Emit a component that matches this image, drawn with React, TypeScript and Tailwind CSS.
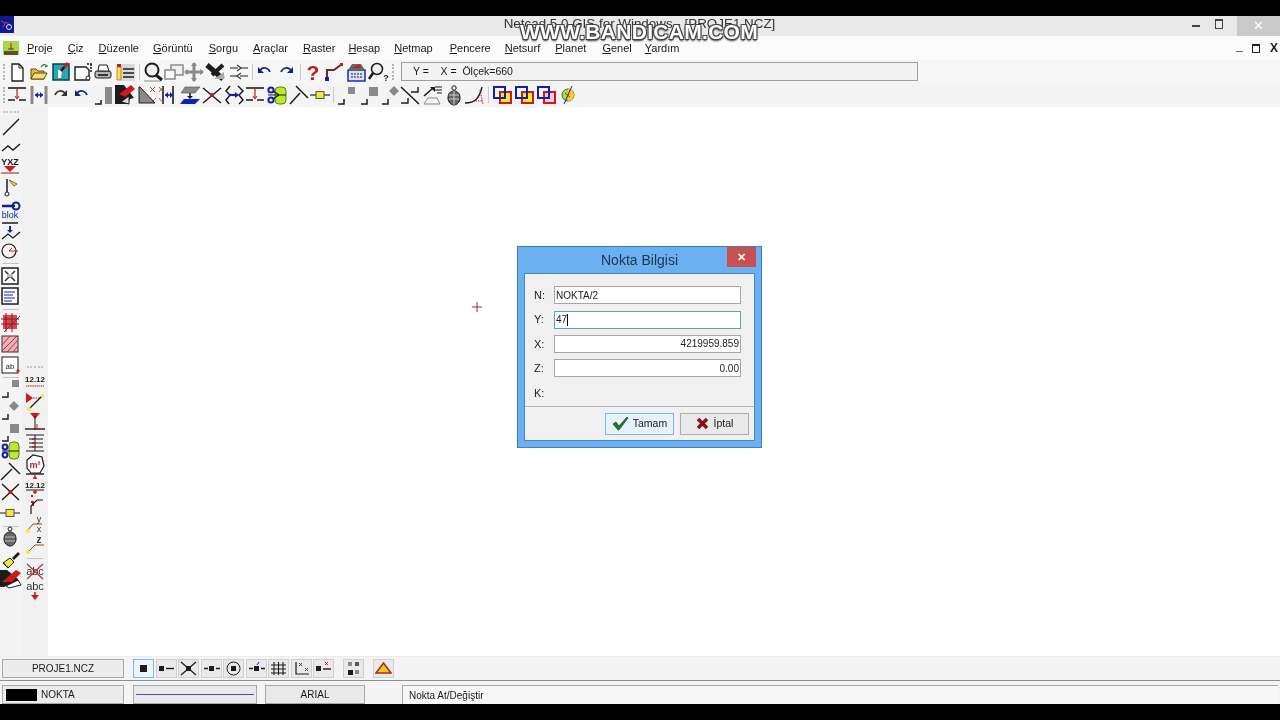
import React from "react";

const FONT = "font-['Liberation_Sans',Arial,sans-serif]";

type P = { children: React.ReactNode; w?: number };
const I = ({ children, w = 22 }: P) => (
  <svg width={w} height={22} viewBox={`0 0 ${w} 22`} fill="none" className="shrink-0 overflow-visible">
    {children}
  </svg>
);
const K = "#1c1c1c";
const G = "#8a8a8a";
const R = "#d01818";
const B = "#1020b0";
const Y = "#f2ea30";

const Grip = ({ v }: { v?: boolean }) =>
  v ? (
    <div className="w-[3px] h-[16px] shrink-0 border-l-2 border-dotted border-[#b5b5b5]" />
  ) : (
    <div className="w-[16px] h-[3px] shrink-0 border-t-2 border-dotted border-[#c8c8c8]" />
  );
const VSep = () => <div className="w-[1px] h-[16px] shrink-0 bg-[#c9c9c9]" />;
const Sp = ({ n }: { n: string }) => <div className={`${n} shrink-0`} />;
const Cell = ({ children }: { children: React.ReactNode }) => (
  <div className="w-[21.7px] shrink-0 flex justify-center">{children}</div>
);

const icons1 = {
  page: <I><path d="M6 3h7l4 4v13H6z" fill="#fff" stroke={K} strokeWidth="1.3" /><path d="M13 3v4h4" stroke={K} /></I>,
  open: <I><path d="M3 18V8h5l2 2h6v8z" fill="#e8c040" stroke="#5a4a10" /><path d="M3 18l3-6h13l-3 6z" fill="#f5dd70" stroke="#5a4a10" /><path d="M13 6c2-3 4-3 6-1l-2 1" stroke="#208020" strokeWidth="1.3" /></I>,
  save: <I><rect x="3" y="3" width="16" height="16" fill="#25a8b8" stroke="#10404a" strokeWidth="1.5" /><path d="M8 3v6h4l-1 8H8" fill="#fff" /><path d="M11 10l7-8" stroke={R} strokeWidth="3" /><path d="M11 10l3-4" stroke={K} strokeWidth="2" /></I>,
  saveas: <I><path d="M3 6h11l3 3v10H3z" fill="#fff" stroke={K} strokeWidth="1.4" /><path d="M15 3h5M19 3v9" stroke={K} strokeWidth="1.5" strokeDasharray="2 1" /><circle cx="16" cy="17" r="2" stroke={K} fill="#fff" /></I>,
  print: <I><rect x="3" y="10" width="16" height="7" rx="2" fill="#b5b5b5" stroke={K} /><path d="M6 10l1-6h8l2 6z" fill="#fff" stroke={K} /><path d="M6 14h10" stroke="#333" strokeWidth="2" /></I>,
  layers: <I><rect x="7" y="3" width="14" height="17" fill="#d8d8d8" /><rect x="3" y="3" width="4" height="3" fill={R} /><rect x="3" y="6" width="4" height="13" fill={Y} stroke="#a04040" strokeWidth=".6" /><path d="M9 8h11M9 12h11M9 16h11" stroke={K} strokeWidth="1.5" /></I>,
  zoom: <I><path d="M2 20h17" stroke={G} /><circle cx="10" cy="9" r="6.5" fill="#eee" stroke={K} strokeWidth="2" /><path d="M14 14l6 5" stroke={K} strokeWidth="3" /></I>,
  win: <I><rect x="9" y="4" width="12" height="10" fill="#f0f0f0" stroke={G} strokeWidth="1.5" /><rect x="3" y="9" width="10" height="9" fill="#f7f7f7" stroke={G} strokeWidth="1.5" /></I>,
  move: <I><path d="M11 2v18M2 11h18" stroke={G} strokeWidth="3" /><path d="M11 1l-3 4h6zM11 21l-3-4h6zM1 11l4-3v6zM21 11l-4-3v6z" fill={G} /></I>,
  xx: <I><path d="M3 4l16 14" stroke={K} strokeWidth="5" /><path d="M19 4L8 14" stroke={K} strokeWidth="4" /><path d="M10 18l10-7v7z" fill="#aaa" /></I>,
  swap: <I><path d="M2 7h8M12 7h8M2 15h8M12 15h8" stroke={G} strokeWidth="1.8" /><path d="M9 4l4 3-4 3M13 12l-4 3 4 3" stroke="#444" strokeWidth="1.4" /></I>,
  undo: <I><path d="M6 9c3-3 8-3 10 2" stroke="#10208a" strokeWidth="1.7" /><path d="M4 6v6h6z" fill="#10208a" /></I>,
  redo: <I><path d="M16 9c-3-3-8-3-10 2" stroke="#10208a" strokeWidth="1.7" /><path d="M18 6v6h-6z" fill="#10208a" /></I>,
  help: <I><text x="11" y="19" textAnchor="middle" fontSize="21" fontWeight="700" fill="#c01c1c" fontFamily="Liberation Sans">?</text></I>,
  poly: <I><path d="M4 18V9h7l8-6" stroke="#802020" strokeWidth="2" /><rect x="2" y="16" width="4" height="4" fill={B} /><rect x="17" y="2" width="3" height="3" fill={R} /></I>,
  calc: <I><rect x="3" y="9" width="17" height="11" fill="#d8e4f0" stroke={B} strokeWidth="1.4" /><path d="M6 13h11M6 16h11" stroke={K} strokeDasharray="2 1" /><path d="M3 9l4-6h9l4 6z" fill="#666" /><path d="M7 7l8-4 1 4z" fill={R} /></I>,
  find: <I><circle cx="9" cy="8" r="5.5" fill="#eee" stroke={K} strokeWidth="1.5" /><path d="M5 12l-4 6" stroke={K} strokeWidth="2.5" /><text x="18" y="20" textAnchor="middle" fontSize="9" fontWeight="700" fill={K} fontFamily="Liberation Sans">?</text></I>,
};

const Tline = () => (
  <>
    <path d="M2 4h18" stroke={K} strokeWidth="1.6" />
    <path d="M2 16h7M13 16h7" stroke={K} strokeWidth="1.6" />
    <path d="M11 5v9" stroke={R} strokeWidth="1.2" />
    <path d="M9 12l2 3 2-3" stroke={R} />
  </>
);

const icons2 = [
  <I><Tline /></I>,
  <I><path d="M4 2v18M18 2v18" stroke={G} strokeWidth="3" /><path d="M7 11h8" stroke={B} strokeWidth="1.5" /><path d="M7 11l3-3v6zM15 11l-3-3v6z" fill={B} /></I>,
  <I><path d="M16 9c-3-3-8-3-10 2" stroke="#333" strokeWidth="1.7" /><path d="M18 6v6h-6z" fill="#333" /></I>,
  <I><path d="M6 9c3-3 8-3 10 2" stroke="#10208a" strokeWidth="1.7" /><path d="M4 6v6h6z" fill="#10208a" /></I>,
  <I><path d="M2 20h6v-4" stroke={K} strokeWidth="1.5" /><rect x="12" y="3" width="7" height="17" fill={G} /></I>,
  <I><path d="M1 1h9l10 13-4 1-2 5H1z" fill={K} /><path d="M5 10l12-9 4 4-10 8z" fill={R} /><path d="M7 18l8-6v8z" fill="#ddd" stroke={K} /></I>,
  <I><path d="M3 3h1l15 16H3z" fill={G} stroke={K} /><path d="M14 3l5 5M19 3l-5 5" stroke="#b04040" /><path d="M15 19l5-5" stroke={R} strokeDasharray="2 1" /></I>,
  <I><path d="M5 2v18M15 2v18" stroke={K} strokeWidth="1.6" /><path d="M7 11h8" stroke={B} strokeWidth="1.6" /><path d="M7 11l3-3v6zM15 11l-3-3v6z" fill={B} /><path d="M1 3l4 5M5 3L1 8M1 14l4 5" stroke="#b06060" /></I>,
  <I><path d="M6 3h15l-5 6H2z" fill={G} stroke="#555" strokeWidth=".6" /><path d="M11 9v5" stroke={K} strokeWidth="1.6" /><path d="M8 12h6l-3 3z" fill={K} /><path d="M5 15h16l-5 5H1z" fill="#1020c0" /></I>,
  <I><path d="M2 4l18 15M20 4L2 19" stroke={K} strokeWidth="1.5" /><circle cx="11" cy="11" r="2" fill={R} /></I>,
  <I><path d="M7 2l-4 5 4 4-4 5 3 4M15 2l5 5-4 4 4 5-4 4" stroke="#111" strokeWidth="1.4" /><path d="M6 11h9" stroke={B} strokeWidth="2.2" /><path d="M12 8v6l4-3z" fill={B} /></I>,
  <I><Tline /></I>,
  <I><rect x="9" y="3" width="11" height="17" rx="4" fill="#b8ea30" stroke="#707010" /><path d="M2 11h18" stroke={K} /><circle cx="5" cy="6" r="2.6" stroke={B} strokeWidth="2" /><circle cx="5" cy="16" r="2.6" stroke={B} strokeWidth="2" /><path d="M7 7l6 4M7 15l6-4" stroke={K} strokeWidth="1.5" /></I>,
  <I><path d="M2 20L12 9" stroke={K} strokeWidth="1.5" /><path d="M8 2l12 12" stroke={K} strokeWidth="1.5" /></I>,
  <I><path d="M1 11h20" stroke={K} strokeWidth="1.2" /><rect x="7" y="7.500" width="8" height="7" fill={Y} stroke="#555" /></I>,
];
const icons3 = [
  <I><path d="M2 20h6v-5" stroke={K} strokeWidth="1.5" /><rect x="12" y="3" width="7" height="7" fill={G} /></I>,
  <I><path d="M2 20h6v-5" stroke={K} strokeWidth="1.5" /><rect x="10" y="3" width="9" height="9" fill={G} /></I>,
  <I><path d="M2 20h6v-5" stroke={K} strokeWidth="1.5" /><path d="M14 2l5 5-5 5-5-5z" fill={G} /></I>,
  <I><path d="M2 3l18 17" stroke={K} strokeWidth="1.5" /><path d="M12 8h7V3" stroke={K} strokeWidth="1.4" /><path d="M2 19h7v-5" stroke={K} strokeWidth="1.4" /></I>,
  <I><path d="M3 12l9-8" stroke={K} strokeWidth="1.6" /><path d="M9 3h5v5z" fill={K} /><path d="M14 3h7M14 6h7M16 9h5" stroke={K} /><path d="M3 20l4-6h9l3 6z" stroke="#888" /></I>,
  <I><path d="M11 7c4 0 6 3 6 7s-3 7-6 7-6-3-6-7 2-7 6-7z" fill="#666" stroke={K} /><path d="M6 11h10M6 15h10M11 7v14" stroke="#ccc" /><circle cx="11" cy="4" r="2.200" stroke={K} /></I>,
  <I><path d="M2 19c10 0 14-4 17-16" stroke={K} strokeWidth="1.4" /><path d="M17 6l3 14" stroke={R} strokeDasharray="1.5 1" /><path d="M10 17h10" stroke={R} strokeDasharray="1.5 1" /></I>,
];
const Boxes = ({ a, b, c }: { a: string; b: string; c: string }) => (
  <I>
    <rect x="9" y="8" width="11" height="11" fill={b} stroke={c} strokeWidth="2" />
    <rect x="3" y="3" width="11" height="11" fill="none" stroke={a} strokeWidth="2" />
  </I>
);

const Side = ({ h, children }: { h: string; children: React.ReactNode }) => (
  <div className={`${h} flex items-center justify-center shrink-0`}>{children}</div>
);
const Hs = ({ h = "h-[10px]" }: { h?: string }) => (
  <div className={`${h} flex items-center justify-center shrink-0`}><div className="w-[16px] h-[1px] bg-[#c4c4c4]" /></div>
);
const T = ({ x, y, s = 8, f = K, w, t }: { x: number; y: number; s?: number; f?: string; w?: number; t: string }) => (
  <text x={x} y={y} textAnchor="middle" fontSize={s} fontWeight={w} fill={f} fontFamily="Liberation Sans">{t}</text>
);

const Btn = ({ children, active }: { children: React.ReactNode; active?: boolean }) => (
  <div className={`w-[21px] h-[19px] shrink-0 flex items-center justify-center border ${active ? "border-[#7db6e8] bg-[#edf5fc]" : "border-[#d0d0d0] bg-[#e9e9e9]"}`}>{children}</div>
);
const Bi = ({ children }: { children: React.ReactNode }) => (
  <svg width="17" height="15" viewBox="0 0 17 15" fill="none" className="shrink-0">{children}</svg>
);
const Panel = ({ w, children, cls = "" }: { w: string; children?: React.ReactNode; cls?: string }) => (
  <div className={`${w} shrink-0 h-[19px] bg-[#e9e9e9] border border-[#a8a8a8] flex items-center ${cls}`}>{children}</div>
);

const Menu = ({ t, ml }: { t: string; ml: string }) => (
  <span className={`${ml} shrink-0`}><span className="underline">{t[0]}</span>{t.slice(1)}</span>
);

const Field = ({ l, v, right, focus, none }: { l: string; v: string; right?: boolean; focus?: boolean; none?: boolean }) => (
  <div className="flex items-center h-[24.4px]">
    <span className="w-[29px] text-[11px] text-[#222] pl-[9px]">{l}</span>
    {!none && (
      <div className={`w-[187px] h-[18px] bg-white border flex items-center px-[1px] text-[10px] text-[#222] ${focus ? "border-[#5b9fd0]" : "border-[#a6a6a6]"} ${right ? "justify-end" : ""}`}>
        {v}
        {focus && <span className="w-[1px] h-[12px] bg-black" />}
      </div>
    )}
  </div>
);

export default function App() {
  return (
    <div className={`${FONT} w-[1280px] h-[720px] overflow-hidden bg-black flex flex-col text-[#1a1a1a] blur-[0.3px]`}>
      <div className="h-[16px] shrink-0 bg-black" />
      {/* title */}
      <div className="h-[20px] shrink-0 bg-[#e9e9e9] relative flex items-center">
        <div className="w-[14px] h-[17px] mt-[-3px] bg-[#101a90] shrink-0 flex items-center justify-center">
          <svg width="14" height="16" viewBox="0 0 14 16" fill="none"><path d="M1 4l4 2M3 10l3-5 5 4" stroke="#c04060" /><circle cx="9" cy="10" r="2.500" stroke="#ddd" /></svg>
        </div>
        <div className="flex-1 text-center text-[13.400px] text-[#333] pl-[73px] mt-[-3px]">Netcad 5.0 GIS for Windows - [PROJE1.NCZ]</div>
        <div className="absolute left-[513px] top-[6px] w-[252px] text-center font-bold text-[21px] leading-[20px] tracking-[0.3px] text-white [text-shadow:-1px_-1px_0_#444,1px_-1px_0_#444,-1px_1px_0_#444,1px_1px_0_#444,0_2px_2px_#333]">WWW.BANDICAM.COM</div>
        <div className="flex items-center shrink-0 h-[20px]">
          <div className="w-[8px] h-[2px] bg-[#444] mr-[15px]" />
          <div className="w-[8px] h-[10px] border border-[#444] border-t-2 mb-[4px] mr-[14px]" />
          <div className="w-[43px] h-[20px] bg-[#c9c9c9] text-white text-[13px] flex items-center justify-center">✕</div>
        </div>
      </div>
      {/* menu */}
      <div className="h-[24px] shrink-0 bg-[#fbfbfb] flex items-center text-[11px] pl-[3px]">
        <svg width="18" height="16" viewBox="0 0 18 16" fill="none" className="shrink-0">
          <rect x="0" y="1" width="16" height="14" fill="#a8d848" /><path d="M1 12h14" stroke="#207020" strokeWidth="2" /><path d="M8 3v7M5 9h6" stroke="#a02020" /><rect x="1" y="13" width="14" height="2" fill="#a03030" />
        </svg>
        <Menu t="Proje" ml="ml-[6px]" />
        <Menu t="Çiz" ml="ml-[15px]" />
        <Menu t="Düzenle" ml="ml-[15px]" />
        <Menu t="Görüntü" ml="ml-[14px]" />
        <Menu t="Sorgu" ml="ml-[16px]" />
        <Menu t="Araçlar" ml="ml-[15px]" />
        <Menu t="Raster" ml="ml-[15px]" />
        <Menu t="Hesap" ml="ml-[13px]" />
        <Menu t="Netmap" ml="ml-[14px]" />
        <Menu t="Pencere" ml="ml-[17px]" />
        <Menu t="Netsurf" ml="ml-[14px]" />
        <Menu t="Planet" ml="ml-[15px]" />
        <Menu t="Genel" ml="ml-[16px]" />
        <Menu t="Yardım" ml="ml-[13px]" />
        <div className="flex-1" />
        <div className="w-[7px] h-[1px] bg-[#666] mt-[7px] mr-[9px]" />
        <div className="w-[8px] h-[9px] border border-[#222] border-t-2 mr-[10px]" />
        <span className="font-bold text-[12px] mr-[2px]">X</span>
      </div>
      {/* toolbar 1 */}
      <div className="h-[23px] shrink-0 bg-[#f6f6f6] flex items-center pl-[3px]">
        <Grip v />
        {icons1.page}{icons1.open}{icons1.save}{icons1.saveas}
        <Sp n="ml-[-2px]" />
        {icons1.print}{icons1.layers}
        <Sp n="w-[3px]" /><VSep /><Sp n="w-[2px]" />
        {icons1.zoom}
        <Sp n="ml-[-2px]" />{icons1.win}<Sp n="ml-[-1px]" />{icons1.move}<Sp n="ml-[-1px]" />{icons1.xx}<Sp n="w-[2px]" />{icons1.swap}
        <Sp n="w-[2px]" /><VSep /><Sp n="w-[1px]" />
        {icons1.undo}<Sp n="ml-[-1px]" />{icons1.redo}
        <Sp n="w-[3px]" /><VSep /><Sp n="w-[1px]" />
        {icons1.help}<Sp n="ml-[-1px]" />{icons1.poly}{icons1.calc}<Sp n="w-[1px]" />{icons1.find}
        <Sp n="w-[2px]" /><Grip v />
        <Sp n="w-[6px]" />
        <div className="w-[517px] h-[19px] shrink-0 bg-[#f2f2f2] border border-[#9e9e9e] text-[10.500px] flex items-center pl-[11px] whitespace-pre">Y =    X =  Ölçek=660</div>
      </div>
      {/* toolbar 2 */}
      <div className="h-[24px] shrink-0 bg-[#f4f4f4] flex items-center pl-[3px]">
        <Grip v />
        {icons2.map((c, i) => <Cell key={i}>{c}</Cell>)}
        <Sp n="w-[2px]" /><VSep /><Sp n="w-[2px]" />
        {icons3[0]}<Sp n="w-[1px]" />{icons3[1]}<Sp n="ml-[-1px]" />{icons3[2]}<Sp n="ml-[-3px]" />{icons3[3]}{icons3[4]}{icons3[5]}<Sp n="ml-[-2px]" />{icons3[6]}
        <Sp n="w-[3px]" /><VSep /><Sp n="w-[2px]" />
        <Boxes a={B} b={Y} c={R} /><Boxes a={B} b={Y} c={R} /><Boxes a={B} b="#f0d0e0" c={R} />
        <I><ellipse cx="11" cy="11" rx="6" ry="6" fill="#a8e030" stroke="#555" /><path d="M11 5a6 6 0 0 1 0 12z" fill="#f2d020" /><path d="M15 2L7 20" stroke={B} /><path d="M8 9l5 4" stroke={R} /></I>
      </div>
      {/* main */}
      <div className="flex-1 min-h-0 flex bg-white">
        <div className="w-[22px] shrink-0 bg-[#f4f4f4] flex flex-col items-center">
          <Side h="h-[10px]"><Grip /></Side>
          <Side h="h-[20px]"><I><path d="M3 19L19 3" stroke={K} strokeWidth="1.4" /></I></Side>
          <Side h="h-[21px]"><I><path d="M2 14l6-5 5 4 7-6" stroke={K} strokeWidth="1.4" /></I></Side>
          <Side h="h-[18px]"><I><T x={10} y={9} s={9} w={700} t="YXZ" /><path d="M4 10h12l-6 6z" fill={R} /><path d="M1 17h18" stroke="#802020" /></I></Side>
          <Side h="h-[21px]"><I><path d="M7 3v13" stroke={K} strokeWidth="1.500" /><circle cx="7" cy="18" r="2" stroke={K} /><path d="M9 4l5 6 3-2z" fill={Y} stroke="#707020" /></I></Side>
          <Side h="h-[25px]"><I><path d="M2 7h13" stroke="#102090" strokeWidth="2.500" /><circle cx="16" cy="7" r="3.500" stroke="#102090" strokeWidth="2" /><T x={10} y={19} s={9} f="#102090" t="blok" /></I></Side>
          <Side h="h-[20px]"><I><path d="M2 2h16" stroke={K} strokeWidth="1.500" /><path d="M10 5v5" stroke={B} strokeWidth="2" /><path d="M7 9h6l-3 3z" fill={B} /><path d="M2 18l6-5 5 4 7-6" stroke={K} strokeWidth="1.200" /></I></Side>
          <Side h="h-[18px]"><I><circle cx="9" cy="11" r="7" stroke={K} strokeWidth="1.200" /><path d="M9 11l3-3M9 11h9" stroke={R} /></I></Side>
          <Hs h="h-[6px]" />
          <Side h="h-[19px]"><I><rect x="2" y="3" width="16" height="16" stroke={K} strokeWidth="1.500" fill="#fff" /><path d="M5 6l10 10M15 6L5 16" stroke="#333" strokeWidth="1.500" /><rect x="7" y="9" width="6" height="3" fill="#bbb" /></I></Side>
          <Side h="h-[21px]"><I><rect x="2" y="3" width="16" height="16" stroke={K} strokeWidth="1.500" fill="#fff" /><path d="M4 7h11M4 10h9M4 13h11M4 16h8" stroke={B} strokeWidth="1.200" /></I></Side>
          <Hs h="h-[7px]" />
          <Side h="h-[20px]"><I><rect x="3" y="3" width="14" height="14" fill="#e84050" /><path d="M1 7h18M1 12h18M6 1v19M12 1v19" stroke="#7a2020" /><path d="M4 20L20 4" stroke="#444" /></I></Side>
          <Side h="h-[21px]"><I><rect x="2" y="3" width="16" height="16" fill="#f0b0b8" stroke="#333" /><path d="M2 12l8-9M2 18l15-15M7 19L18 7M13 19l5-6" stroke="#b03040" /></I></Side>
          <Side h="h-[21px]"><I><rect x="2" y="3" width="16" height="16" stroke={K} fill="#fff" /><T x={10} y={15} s={8} t="ab" /><path d="M16 17h4M18 15v4" stroke={R} /></I></Side>
          <Hs h="h-[5px]" />
          <Side h="h-[15px]"><I><path d="M2 20h6v-5" stroke={K} strokeWidth="1.400" /><rect x="12" y="3" width="7" height="7" fill={G} /></I></Side>
          <Side h="h-[30px]"><I><path d="M2 20h6v-5" stroke={K} strokeWidth="1.400" /><path d="M14 2l5 5-5 5-5-5z" fill={G} /></I></Side>
          <Side h="h-[14px]"><I><path d="M2 20h6v-5" stroke={K} strokeWidth="1.400" /><rect x="10" y="3" width="9" height="9" fill={G} /></I></Side>
          <Side h="h-[24px]"><I><rect x="9" y="2" width="10" height="17" rx="4" fill="#b8ea30" stroke="#707010" /><path d="M2 11h17" stroke={K} /><circle cx="5" cy="7" r="2.400" stroke={B} strokeWidth="2" /><circle cx="5" cy="15" r="2.400" stroke={B} strokeWidth="2" /></I></Side>
          <Side h="h-[16px]"><I><path d="M1 20L12 9" stroke={K} strokeWidth="1.400" /><path d="M9 3l11 11" stroke={K} strokeWidth="1.400" /></I></Side>
          <Side h="h-[26px]"><I><path d="M2 3l17 16M19 3L2 19" stroke={K} strokeWidth="1.400" /><circle cx="10.500" cy="11" r="2" fill={R} /></I></Side>
          <Side h="h-[16px]"><I><path d="M0 11h20" stroke={K} /><rect x="6" y="7.500" width="8" height="7" fill={Y} stroke="#555" /></I></Side>
          <Hs h="h-[10px]" />
          <Side h="h-[12px]"><I><path d="M10 6c4 0 6 3 6 7s-3 7-6 7-6-3-6-7 2-7 6-7z" fill="#666" stroke={K} /><path d="M5 11h10M5 15h10" stroke="#bbb" /><circle cx="10" cy="3" r="2" stroke={K} /></I></Side>
          <Side h="h-[32px]"><I><path d="M3 15l7-5 4 4-6 6z" fill={Y} stroke={K} /><path d="M12 10l6-6 2 2-6 6z" fill={K} /><path d="M4 15l4 4" stroke={K} strokeDasharray="1 1" /></I></Side>
          <Side h="h-[8px]"><I><path d="M0 2h7l11 9v6H8l-4 2H0z" fill={K} /><path d="M2 14L16 2l5 3-9 9z" fill={R} /><path d="M6 18l12-6 3 5-12 3z" fill="#fff" stroke={K} /></I></Side>
        </div>
        <div className="w-[26px] shrink-0 bg-[#f1f1f1] flex flex-col items-center">
          <Sp n="h-[256px]" />
          <Side h="h-[9px]"><Grip /></Side>
          <Side h="h-[15px]"><I><T x={11} y={13} s={8} w={700} t="12.12" /><path d="M2 17h18" stroke={R} strokeDasharray="1.500 .6" /></I></Side>
          <Sp n="h-[3px]" />
          <Side h="h-[21px]"><I><path d="M2 3v10l7-5z" fill={R} /><path d="M9 8h8" stroke={R} strokeDasharray="1.500 1" /><path d="M5 19L19 5" stroke={K} strokeWidth="1.200" /><rect x="17" y="4" width="3" height="3" fill={Y} /><circle cx="5" cy="19" r="2" fill={Y} /></I></Side>
          <Side h="h-[21px]"><I><path d="M6 2h10l-5 6z" fill={R} /><path d="M11 5v14" stroke={K} /><path d="M1 18h20" stroke={K} strokeWidth="1.400" /><path d="M13 13v5h3" stroke={R} /></I></Side>
          <Side h="h-[22px]"><I><path d="M2 3h18M2 19h18M11 3v16M5 7h14M5 11h14M5 15h14" stroke={K} /><path d="M8 7h3M8 11h3M8 15h3" stroke={R} strokeWidth="1.400" /></I></Side>
          <Side h="h-[20px]"><I><path d="M3 7l6-5 9 2 2 9-4 7H7l-4-5z" fill="#fff" stroke={K} strokeWidth="1.200" /><text x="11" y="15" textAnchor="middle" fontSize="9" fontWeight="700" fill="#b02020" fontFamily="Liberation Sans">m²</text></I></Side>
          <Side h="h-[20px]"><I><path d="M2 1h18" stroke={K} strokeWidth="1.400" /><path d="M11 2v4M9 5h4" stroke={R} strokeWidth="1.400" /><T x={11} y={15} s={8} w={700} t="12.12" /><path d="M2 17h18" stroke={K} /><path d="M11 17v4M9 19h4" stroke={R} strokeWidth="1.400" /></I></Side>
          <Side h="h-[21px]"><I><path d="M9 2h-2M9 12V8h-2" stroke={R} strokeWidth="2" /><path d="M7 20v-8l6-6h6" stroke={K} strokeWidth="1.200" /></I></Side>
          <Side h="h-[20px]"><I><path d="M3 17l6-7h9" stroke="#8a5020" /><circle cx="4" cy="17" r="2" fill={Y} /><T x={15} y={8} s={9} f="#333" t="y" /><T x={15} y={18} s={9} f="#333" t="x" /></I></Side>
          <Side h="h-[20px]"><I><path d="M3 19l8-8h9" stroke="#8a5020" /><circle cx="4" cy="18" r="2" fill={Y} /><T x={15} y={9} s={10} f="#333" w={700} t="z" /></I></Side>
          <Hs h="h-[6px]" />
          <Side h="h-[20px]"><I><T x={11} y={15} s={11} f="#333" t="abc" /><path d="M3 4l16 15M19 4L3 19" stroke="#c03040" strokeWidth="1.200" /></I></Side>
          <Side h="h-[18px]"><I><T x={11} y={11} s={11} f="#333" t="abc" /><path d="M11 13v6" stroke={R} strokeWidth="1.600" /><path d="M7 16h8l-4 5z" fill={R} /></I></Side>
        </div>
        <div className="flex-1 relative bg-white">
          <svg width="12" height="12" viewBox="0 0 12 12" className="absolute left-[423px] top-[194px]"><path d="M6 1v10M1 6h10" stroke="#b02020" strokeWidth="1" /></svg>
          {/* dialog */}
          <div className="absolute left-[469px] top-[139px] w-[245px] h-[202px] bg-[#6bb0f0] border border-[#3d7fb8] flex flex-col">
            <div className="h-[26px] shrink-0 relative flex items-center justify-center text-[14px] text-[#1c3550]">
              Nokta Bilgisi
              <div className="absolute right-[5px] top-0 w-[29px] h-[20px] bg-[#c75050] text-white text-[11px] font-bold flex items-center justify-center">✕</div>
            </div>
            <div className="mx-[6px] mb-[6px] flex-1 bg-[#f0f0f0] border border-[#4a86bd] flex flex-col">
              <div className="flex-1 flex flex-col pt-[9px] pr-[13px]">
                <Field l="N:" v="NOKTA/2" />
                <Field l="Y:" v="47" focus />
                <Field l="X:" v="4219959.859" right />
                <Field l="Z:" v="0.00" right />
                <Field l="K:" v="" none />
              </div>
              <div className="h-[34px] shrink-0 bg-[#f0f0f0] border-t border-[#b4b4b4] flex items-center justify-end pr-[5px] gap-[6px] text-[10.500px]">
                <div className="w-[69px] h-[22px] bg-[#e5f1fb] border border-[#7eb4ea] flex items-center justify-center gap-[4px]">
                  <svg width="17" height="15" viewBox="0 0 17 15"><path d="M1 8l3-2 3 4 8-9 1 1-9 12h-1z" fill="#1f7a1f" stroke="#0c3c0c" strokeWidth=".6" /></svg>
                  Tamam
                </div>
                <div className="w-[69px] h-[22px] bg-[#e9e9e9] border border-[#acacac] flex items-center justify-center gap-[5px]">
                  <svg width="13" height="13" viewBox="0 0 13 13"><path d="M2 2l9 9M11 2l-9 9" stroke="#8a1414" strokeWidth="3.500" /></svg>
                  İptal
                </div>
              </div>
            </div>
          </div>
        </div>
      </div>
      {/* bottom tools */}
      <div className="h-[24px] shrink-0 bg-[#f4f4f4] border-t border-[#ececec] flex items-center pl-[2px]">
        <Panel w="w-[122px]" cls="justify-center text-[10px] bg-[#ececec]">PROJE1.NCZ</Panel>
        <div className="flex items-center gap-[1.500px] ml-[9px]">
          <Btn active><Bi><rect x="5" y="4" width="7" height="7" fill={K} /></Bi></Btn>
          <Btn><Bi><rect x="1" y="5" width="5" height="5" fill={K} /><path d="M8 7.500h8" stroke={K} strokeWidth="1.400" /></Bi></Btn>
          <Btn><Bi><path d="M1 1l15 13M16 1L1 14" stroke={K} strokeWidth="1.200" /><rect x="6" y="5" width="5" height="5" fill={K} /></Bi></Btn>
          <Btn><Bi><path d="M1 7.500h16" stroke={K} strokeDasharray="4 2" strokeWidth="1.400" /><rect x="6" y="5" width="5" height="5" fill={K} /></Bi></Btn>
          <Btn><Bi><circle cx="8.500" cy="7.500" r="6.500" stroke={K} /><rect x="6" y="5" width="5" height="5" fill={K} /></Bi></Btn>
          <Btn><Bi><path d="M1 7.500h16" stroke={K} strokeDasharray="4 2" strokeWidth="1.400" /><rect x="6" y="5" width="5" height="5" fill={K} /><path d="M9 4l2-3" stroke={B} /></Bi></Btn>
          <Btn><Bi><path d="M1 4h15M1 8h15M1 12h15M4 1v13M8.500 1v13M13 1v13" stroke={K} strokeWidth="1.100" /></Bi></Btn>
          <Btn><Bi><path d="M3 1v12h13" stroke={K} strokeWidth="1.200" /><path d="M6 2l3 3M9 2L6 5M12 7l3 3M15 7l-3 3" stroke="#444" /></Bi></Btn>
          <Btn><Bi><rect x="1" y="5" width="5" height="5" fill={K} /><path d="M8 8h8" stroke={K} strokeWidth="1.400" /><path d="M10 1l3 3M13 1l-3 3" stroke={R} /></Bi></Btn>
        </div>
        <div className="ml-[9px] flex items-center gap-[9px]">
          <Btn><Bi><rect x="10" y="1" width="4" height="4" fill="#555" /><rect x="3" y="1" width="4" height="4" fill="#888" /><rect x="3" y="9" width="5" height="5" fill={K} /><rect x="10" y="9" width="4" height="4" fill="#888" /></Bi></Btn>
          <Btn><Bi><path d="M8.500 2L16 12H1z" fill="#ecc820" stroke="#a03020" strokeWidth="1.500" /></Bi></Btn>
        </div>
      </div>
      <div className="h-[1px] shrink-0 bg-[#8f8f8f]" />
      {/* status */}
      <div className="h-[23px] shrink-0 bg-[#f4f4f4] flex items-end pl-[2px] text-[10px]">
        <Panel w="w-[122px]" cls="pl-[3px] bg-[#ececec]"><div className="w-[31px] h-[12px] bg-black" /><span className="ml-[4px]">NOKTA</span></Panel>
        <Panel w="w-[124px] ml-[9px]" cls="px-[2px]"><div className="w-full h-[1px] bg-[#4848c8]" /></Panel>
        <Panel w="w-[100px] ml-[8px]" cls="justify-center">ARIAL</Panel>
        <div className="w-[876px] ml-[37px] h-[19px] shrink-0 bg-[#f7f7f7] border-t border-l border-[#a8a8a8] flex items-center pl-[6px]">Nokta At/Değiştir</div>
      </div>
      <div className="h-[16px] shrink-0 bg-black" />
    </div>
  );
}
